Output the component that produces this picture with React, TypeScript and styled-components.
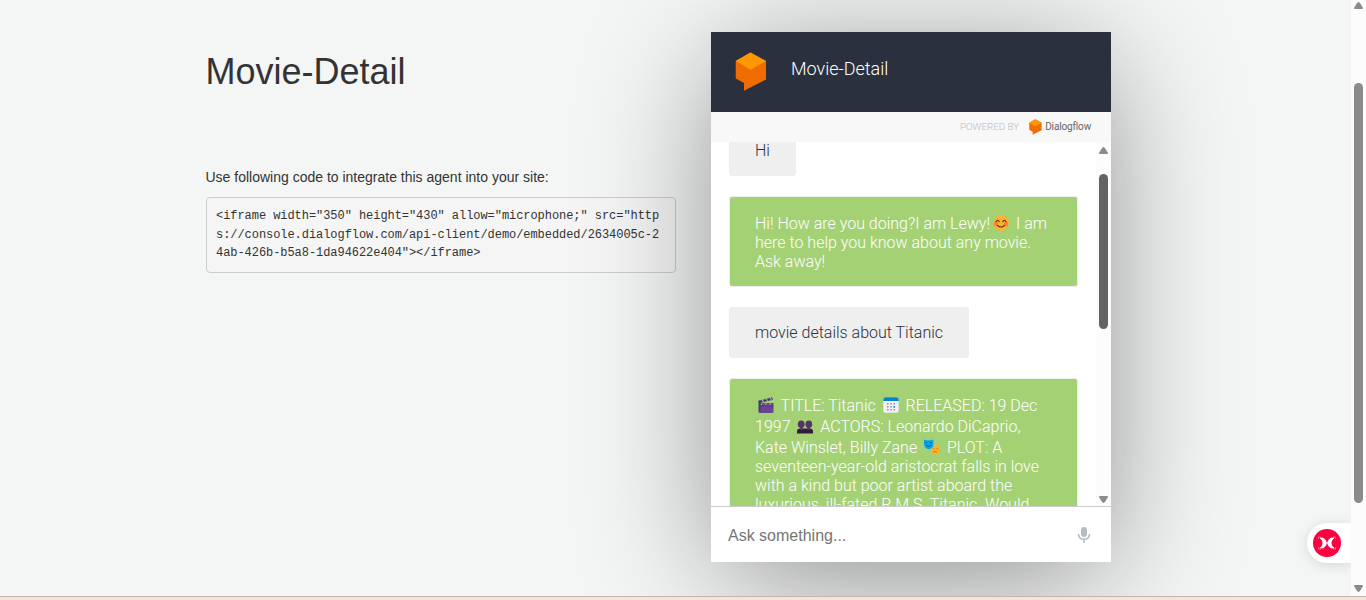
import type { ReactNode } from 'react';
import styled, { createGlobalStyle } from 'styled-components';

const GlobalStyle = createGlobalStyle`
  * { box-sizing: border-box; }
  body {
    margin: 0;
    overflow: hidden;
    color: #333;
    background: #f4f6f5;
    font-family: "Liberation Sans", Arial, sans-serif;
  }
`
const Screen = styled.div`
  display: flex;
  flex-direction: column;
  height: 600px;
  overflow: hidden;
`
const Viewport = styled.div`
  display: flex;
  height: 596px;
  overflow: hidden;
`
const BottomEdge = styled.div`
  height: 4px;
  background: #f5e4da;
  border-top: 1px solid #c9b3a8;
`
const Content = styled.main`
  position: relative;
  display: flex;
  flex: 1;
  gap: 35px;
  padding-left: 205.5px;
  overflow: hidden;
`
const Info = styled.section`
  width: 470.5px;
  padding-top: 52px;
  h1 {
    margin: 0;
    font-size: 36px;
    font-weight: 400;
    line-height: 40px;
  }
  p {
    margin: 75px 0 10px;
    font-size: 14px;
    line-height: 20px;
  }
`
const CodeBlock = styled.pre`
  margin: 0;
  padding: 9.4px 9.5px;
  height: 76px;
  font-family: "Liberation Mono", monospace;
  font-size: 12px;
  letter-spacing: -0.054px;
  line-height: 18.5px;
  white-space: pre;
  background: #f5f5f5;
  border: 1px solid #ccc;
  border-radius: 4px;
`
const Chat = styled.section`
  display: flex;
  flex-direction: column;
  width: 400px;
  height: 530px;
  margin-top: 32px;
  background: #fff;
  font-family: Roboto, sans-serif;
  font-weight: 300;
  box-shadow: 0 20px 125px -10px rgba(0, 0, 0, 0.46);
`
const ChatHeader = styled.header`
  display: flex;
  align-items: center;
  height: 80px;
  padding-left: 24px;
  gap: 24px;
  color: #fff;
  font-size: 18px;
  background: #2b303e;
  svg {
    margin-top: -1px;
  }
  span {
    margin-top: -7px;
  }
`
const PoweredBy = styled.div`
  display: flex;
  align-items: center;
  justify-content: flex-end;
  height: 30px;
  padding: 0 20px 1px 0;
  color: #b7bbc4;
  font-size: 9.8px;
  background: #f8f8f8;
  svg {
    margin: 1px 0 0 10px;
  }
  b {
    margin-left: 3px;
    color: #666;
    font-size: 10px;
    font-weight: 400;
    letter-spacing: -0.15px;
  }
`
const ChatBody = styled.div`
  display: flex;
  height: 364px;
  overflow: hidden;
`
const Messages = styled.div`
  display: flex;
  flex: 1;
  flex-direction: column;
  align-items: flex-start;
  gap: 20px;
  height: 600px;
  margin-top: -17px;
  padding: 0 18px;
`
const Bubble = styled.div<{ $bot?: boolean }>`
  flex: none;
  width: ${({ $bot }) => ($bot ? '349px' : 'auto')};
  padding: 15px 25px;
  color: ${({ $bot }) => ($bot ? '#fff' : '#2b313f')};
  font-size: 16px;
  white-space: nowrap;
  background: ${({ $bot }) => ($bot ? '#a5d175' : '#efefef')};
  border: 1px solid #eee;
  border-radius: 3px;
`
const Line = styled.div<{ $tall?: boolean }>`
  height: ${({ $tall }) => ($tall ? 21 : 19)}px;
  line-height: ${({ $tall }) => ($tall ? 23 : 19)}px;
`
const EmojiIcon = styled.svg`
  width: 16px;
  height: 16px;
  margin: 0 3px;
  vertical-align: -2px;
`
const Track = styled.div<{ $top: number; $bottom: number }>`
  display: flex;
  flex-direction: column;
  align-items: center;
  width: 15px;
  padding: ${({ $top }) => $top}px 0 ${({ $bottom }) => $bottom}px;
  background: #fcfcfc;
`
const Thumb = styled.div<{ $gap: number; $size: number; $color: string }>`
  width: 9px;
  height: ${({ $size }) => $size}px;
  margin: ${({ $gap }) => $gap}px 0 auto;
  background: ${({ $color }) => $color};
  border-radius: 5px;
`
const AskBar = styled.div`
  display: flex;
  align-items: center;
  justify-content: space-between;
  height: 56px;
  padding: 2px 19px 0 17px;
  border-top: 1px solid #ccc;
  svg {
    margin-top: -2px;
  }
`
const AskInput = styled.input`
  flex: 1;
  padding: 0;
  border: 0;
  outline: 0;
  background: none;
  font-family: "Liberation Sans", Arial, sans-serif;
  font-size: 16px;
  &::placeholder {
    color: #757575;
  }
`
const SideTab = styled.div`
  position: absolute;
  right: 0;
  top: 523px;
  display: flex;
  align-items: center;
  width: 44px;
  height: 40px;
  padding-left: 6px;
  background: #fff;
  border-radius: 20px 0 0 20px;
  box-shadow: 0 2px 14px rgba(0, 0, 0, 0.13);
`

const Logo = ({ width, height }: { width: number; height: number }) => (
  <svg width={width} height={height} viewBox="0 0 32 39">
    <path d="M15.5.5 31 9v18.500L9 38.700V31L.7 26.500V9z" fill="#ef6c00" />
    <path d="M15.5.5 31 9 15.500 17.700.7 9z" fill="#ff9800" />
  </svg>
)

const Smile = () => (
  <EmojiIcon viewBox="0 0 16 16" role="img" aria-label="smile">
    <circle cx="8" cy="8" r="7.8" fill="#ffb02e" />
    <circle cx="3" cy="9" r="2.2" fill="#ff822d" />
    <circle cx="13" cy="9" r="2.2" fill="#ff822d" />
    <path d="M3 6.7q1.6-3 3.2 0M9.8 6.7q1.6-3 3.2 0M4.5 10.3q3.5 3.4 7 0" fill="none" stroke="#402a32" strokeWidth="1.1" strokeLinecap="round" />
  </EmojiIcon>
)

const Clapper = () => (
  <EmojiIcon viewBox="0 0 16 16" role="img" aria-label="clapper">
    <path d="M1.5 6h14v8.8q0 1.2-1.2 1.2H2.7q-1.2 0-1.2-1.2z" fill="#6d4490" />
    <path d="M1.5 9h14" stroke="#433b6b" strokeWidth=".7" />
    <path d="M.5 3.8 14.2.3l.7 2.4L1.2 6.3z" fill="#433b6b" />
    <path d="m4 3 1.7 2M8 1.9l1.7 2M12 .9l1.7 2M3 8l1.3-1.7M7.2 8l1.3-1.7M11.4 8l1.3-1.7" stroke="#a99bc4" strokeWidth="1.2" />
    <path d="M.5 3.8h2v12h-1q-1 0-1-1z" fill="#433b6b" />
  </EmojiIcon>
)

const Calendar = () => (
  <EmojiIcon viewBox="0 0 16 16" role="img" aria-label="calendar">
    <rect x=".3" y=".3" width="15.4" height="15.4" rx="2.5" fill="#f3eef8" />
    <path d="M.3 4V2.8Q.3.3 2.8.3h10.4q2.5 0 2.5 2.5V4z" fill="#0084ce" />
    <path d="M4 6.8h1.5M7.2 6.8h1.5M10.5 6.8H12M4 9.8h1.5M7.2 9.8h1.5M4 12.8h1.5M7.2 12.8h1.5M10.5 12.8H12" stroke="#998ea4" strokeWidth="1.5" />
    <path d="M10.5 9.8H12" stroke="#0084ce" strokeWidth="1.8" />
  </EmojiIcon>
)

const People = () => (
  <EmojiIcon viewBox="0 0 16 16" role="img" aria-label="people">
    <path d="M0 15.5v-2q0-3 3.3-3h9.4q3.3 0 3.3 3v2z" fill="#321b41" />
    <path d="M3 8h2.5v4H3zM10.5 8H13v4h-2.5z" fill="#533566" />
    <ellipse cx="4.2" cy="6.3" rx="3.4" ry="3.8" fill="#533566" />
    <ellipse cx="11.8" cy="6.3" rx="3.4" ry="3.8" fill="#533566" />
  </EmojiIcon>
)

const Masks = () => (
  <EmojiIcon viewBox="0 0 16 16" role="img" aria-label="masks">
    <path d="M7.5 6.5q4 .6 8.5-1v4.8q-.7 5.4-4.3 5.5-4-.5-4.3-4z" fill="#ffb02e" />
    <path d="M9 13.4q1.8-2.2 4 0M9 9.5l1.7.5M12.6 9.8l1.8-.8" fill="none" stroke="#d67d00" strokeWidth="1" />
    <path d="M0 .5q4.6 1.7 9.4 0v5.3q-.5 4-4.6 4.5Q.7 9.8 0 5.8z" fill="#00a6ed" />
    <path d="M1.4 3.8q1-.9 2 0M6 3.8q1-.9 2 0M2 6q2.7 3 5.4 0" fill="none" stroke="#00519c" strokeWidth=".9" />
  </EmojiIcon>
)

const Arrow = ({ down }: { down?: boolean }) => (
  <svg width="9" height="7" viewBox="0 0 9 7">
    <path d={down ? 'M.6.5h7.8v.8L5.2 6.3H3.8L.6 1.3z' : 'M.6 6.5h7.8v-.8L5.2.7H3.8L.6 5.7z'} fill="#8b8b8b" stroke="#8b8b8b" strokeLinejoin="round" />
  </svg>
)

type ScrollBarProps = { top: number; bottom: number; gap: number; size: number; color: string };

const ScrollBar = ({ top, bottom, gap, size, color }: ScrollBarProps) => (
  <Track $top={top} $bottom={bottom}>
    <Arrow />
    <Thumb $gap={gap} $size={size} $color={color} />
    <Arrow down />
  </Track>
)

const Tall = ({ children }: { children: ReactNode }) => <Line $tall>{children}</Line>

const code = `<iframe width="350" height="430" allow="microphone;" src="http
s://console.dialogflow.com/api-client/demo/embedded/2634005c-2
4ab-426b-b5a8-1da94622e404"></iframe>`;

const App = () => {
  return (
    <Screen>
      <GlobalStyle />
      <Viewport>
        <Content>
          <Info>
            <h1>Movie-Detail</h1>
            <p>Use following code to integrate this agent into your site:</p>
            <CodeBlock>{code}</CodeBlock>
          </Info>
          <Chat>
            <ChatHeader>
              <Logo width={32} height={39} />
              <span>Movie-Detail</span>
            </ChatHeader>
            <PoweredBy>POWERED BY<Logo width={13} height={16} /><b>Dialogflow</b></PoweredBy>
            <ChatBody>
              <Messages>
                <Bubble><Line>Hi</Line></Bubble>
                <Bubble $bot>
                  <Tall>Hi! How are you doing?I am Lewy!<Smile /> I am</Tall>
                  <Line>here to help you know about any movie.</Line>
                  <Line>Ask away!</Line>
                </Bubble>
                <Bubble><Line>movie details about Titanic</Line></Bubble>
                <Bubble $bot>
                  <Tall><Clapper /> TITLE: Titanic <Calendar /> RELEASED: 19 Dec</Tall>
                  <Tall>1997 <People /> ACTORS: Leonardo DiCaprio,</Tall>
                  <Tall>Kate Winslet, Billy Zane <Masks /> PLOT: A</Tall>
                  <Line>seventeen-year-old aristocrat falls in love</Line>
                  <Line>with a kind but poor artist aboard the</Line>
                  <Line>luxurious, ill-fated R.M.S. Titanic. Would</Line>
                </Bubble>
              </Messages>
              <ScrollBar top={5} bottom={3} gap={20} size={155} color="#636363" />
            </ChatBody>
            <AskBar>
              <AskInput type='text' placeholder='Ask something...' />
              <svg width="16" height="18" viewBox="0 0 16 18">
                <rect x="5" y="1" width="6" height="10" rx="3" fill="#b7bbc4" />
                <path d="M2.5 8q.3 5.3 5.5 5.3T13.5 8M8 13v4" fill="none" stroke="#b7bbc4" strokeWidth="1.6" />
              </svg>
            </AskBar>
          </Chat>
          <SideTab>
            <svg width="28" height="28" viewBox="0 0 28 28">
              <circle cx="14" cy="14" r="14" fill="#ff0040" />
              <path d="M7 9h3q3 1.5 3.5 5-.5 3.5-3.5 5H7q3-2 3-5T7 9zM21 9h-3q-3 1.5-3.5 5 .5 3.5 3.5 5h3q-3-2-3-5t3-5z" fill="#fff" stroke="#fff" strokeWidth=".8" />
              <path d="M5.5 10V8H8M22.5 10V8H20M5.5 18v2H8M22.5 18v2H20" fill="none" stroke="#ff8aa5" strokeWidth=".7" />
            </svg>
          </SideTab>
        </Content>
        <ScrollBar top={2} bottom={4} gap={74} size={420} color="#8b8b8b" />
      </Viewport>
      <BottomEdge />
    </Screen>
  )
}
export default App;
